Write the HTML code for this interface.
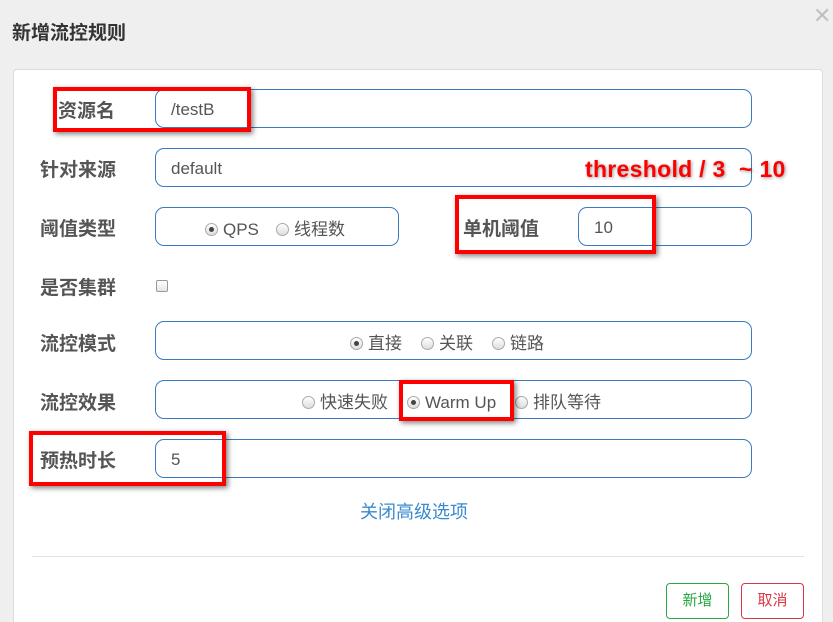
<!DOCTYPE html>
<html><head><meta charset="utf-8"><style>
*{box-sizing:border-box;margin:0;padding:0}
html,body{width:833px;height:622px;overflow:hidden}
body{background:#efefef;position:relative;font-family:"Liberation Sans","Noto Sans CJK SC",sans-serif;color:#555}
.a{position:absolute}
.title{left:12px;top:18px;font-size:19px;font-weight:bold;color:#333}
.close{left:813px;top:3px;font-size:22px;color:#c0c0c0}
.panel{left:13px;top:69px;width:810px;height:553px;background:#fff;border:1px solid #ddd;border-bottom:none;border-radius:4px 4px 0 0}
.lbl{font-size:19px;font-weight:bold;color:#555;line-height:20px}
.inp{border:1px solid #3a7bbf;border-radius:9px;height:39px;font-size:17px;color:#555;line-height:37px;padding-left:15px;padding-top:1px;background:#fff}
.r{display:inline-block;width:13px;height:13px;border-radius:50%;border:1px solid #aaa;background:linear-gradient(#fff,#ddd);vertical-align:-1px;margin-right:5px;position:relative}
.r.on::after{content:"";position:absolute;left:3px;top:3px;width:5px;height:5px;border-radius:50%;background:#444}
.red{border:4px solid #f00;box-shadow:2px 2px 5px rgba(0,0,0,.5)}
.btn{border-radius:4px;font-size:15px;text-align:center;line-height:34px;height:36px;width:63px;background:#fff}
.o{position:absolute;top:0}
</style></head><body>
<div class="a title">新增流控规则</div>
<div class="a close">✕</div>
<div class="a panel"></div>

<div class="a lbl" style="left:58px;top:102px">资源名</div>
<div class="a inp" style="left:155px;top:89px;width:597px">/testB</div>

<div class="a lbl" style="left:40px;top:161px">针对来源</div>
<div class="a inp" style="left:155px;top:148px;width:597px">default</div>
<div class="a" style="left:585px;top:156px;font-size:23px;font-weight:bold;color:#f00;text-shadow:1px 1px 3px rgba(0,0,0,.4);letter-spacing:0.3px">threshold / 3 &nbsp;~ 10</div>

<div class="a lbl" style="left:40px;top:220px">阈值类型</div>
<div class="a inp" style="left:155px;top:207px;width:244px;padding:0"><span class="o" style="left:49px;top:3px"><span class="r on"></span>QPS</span><span class="o" style="left:120px;top:3px"><span class="r"></span>线程数</span></div>
<div class="a lbl" style="left:463px;top:220px">单机阈值</div>
<div class="a inp" style="left:578px;top:207px;width:174px">10</div>

<div class="a lbl" style="left:40px;top:279px">是否集群</div>
<div class="a" style="left:156px;top:280px;width:12px;height:12px;border:1px solid #999;border-radius:2px;background:linear-gradient(#fff,#e5e5e5)"></div>

<div class="a lbl" style="left:40px;top:335px">流控模式</div>
<div class="a inp" style="left:155px;top:321px;width:597px;padding:0"><span class="o" style="left:194px;top:3px"><span class="r on"></span>直接</span><span class="o" style="left:265px;top:3px"><span class="r"></span>关联</span><span class="o" style="left:336px;top:3px"><span class="r"></span>链路</span></div>

<div class="a lbl" style="left:40px;top:394px">流控效果</div>
<div class="a inp" style="left:155px;top:380px;width:597px;padding:0"><span class="o" style="left:146px;top:3px"><span class="r"></span>快速失败</span><span class="o" style="left:251px;top:3px"><span class="r on"></span>Warm Up</span><span class="o" style="left:359px;top:3px"><span class="r"></span>排队等待</span></div>

<div class="a lbl" style="left:40px;top:452px">预热时长</div>
<div class="a inp" style="left:155px;top:439px;width:597px">5</div>

<div class="a" style="left:360px;top:498px;font-size:18px;color:#3a8ad0">关闭高级选项</div>
<div class="a" style="left:32px;top:556px;width:772px;height:1px;background:#e2e2e2"></div>
<div class="a btn" style="left:666px;top:583px;border:1px solid #28a745;color:#28a745">新增</div>
<div class="a btn" style="left:741px;top:583px;border:1px solid #dc3545;color:#dc3545">取消</div>

<div class="a red" style="left:53px;top:87px;width:198px;height:45px"></div>
<div class="a red" style="left:455px;top:195px;width:201px;height:59px"></div>
<div class="a red" style="left:399px;top:380px;width:115px;height:41px"></div>
<div class="a red" style="left:29px;top:431px;width:197px;height:55px"></div>
</body></html>
